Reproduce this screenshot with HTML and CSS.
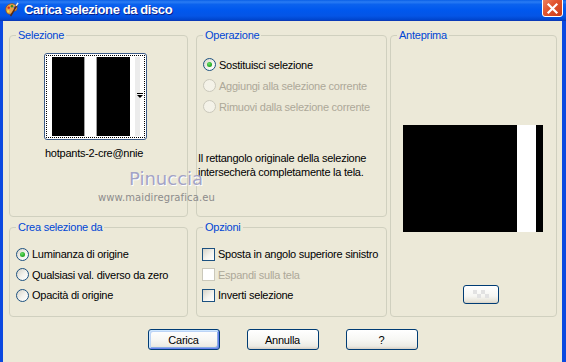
FILE: index.html
```html
<!DOCTYPE html>
<html lang="it">
<head>
<meta charset="utf-8">
<title>Carica selezione da disco</title>
<link rel="stylesheet" href="styles.css">
</head>
<body>
<div class="window">
  <header class="titlebar">
    <svg class="appicon" width="16" height="16" viewBox="0 0 16 16">
      <path d="M2 9 C1 4 6 1 10 2 C14 3 15 7 13 9 C12 10 10 9 9 11 C8 14 3 14 2 9 Z" fill="#e9a24a" stroke="#8a4a1a" stroke-width="0.8"/>
      <circle cx="5" cy="6" r="1.3" fill="#d62a1e"/>
      <circle cx="8.5" cy="4.5" r="1.3" fill="#2a8c2a"/>
      <circle cx="11.5" cy="6" r="1.2" fill="#2a4ad6"/>
      <circle cx="4.5" cy="10" r="1.2" fill="#f6e03a"/>
      <path d="M7 15 L14 3" stroke="#5a2a10" stroke-width="1.6"/>
      <path d="M13 4 L15 1" stroke="#f0f0f0" stroke-width="1.6"/>
    </svg>
    <span class="title">Carica selezione da disco</span>
    <div class="close">
      <svg width="13" height="13" viewBox="0 0 13 13"><path d="M2.5 2.5 L10.5 10.5 M10.5 2.5 L2.5 10.5" stroke="#fff" stroke-width="2.2" stroke-linecap="square"/></svg>
    </div>
  </header>

  <main class="body">
    <div class="groups">
      <fieldset class="grp sel">
        <legend>Selezione</legend>
        <div class="thumb">
          <div class="focus">
            <div class="img">
              <span class="st blk a"></span>
              <span class="st wht a"></span>
              <span class="st blk b"></span>
              <span class="st wht b"></span>
              <span class="st gry"></span>
            </div>
          </div>
          <span class="dd-arrow"></span>
        </div>
        <div class="fname">hotpants-2-cre@nnie</div>
      </fieldset>

      <fieldset class="grp op">
        <legend>Operazione</legend>
        <div class="opts">
          <div class="row"><span class="radio on"></span><span class="lbl">Sostituisci selezione</span></div>
          <div class="row dis"><span class="radio"></span><span class="lbl">Aggiungi alla selezione corrente</span></div>
          <div class="row dis"><span class="radio"></span><span class="lbl">Rimuovi dalla selezione corrente</span></div>
        </div>
        <p class="note">Il rettangolo originale della selezione intersecherà completamente la tela.</p>
      </fieldset>

      <fieldset class="grp prev">
        <legend>Anteprima</legend>
        <div class="preview">
          <span class="pv blk1"></span><span class="pv wht1"></span><span class="pv blk2"></span>
        </div>
        <div class="smallbtn">
          <svg width="16" height="10" viewBox="0 0 16 10">
            <rect x="0" y="0" width="4" height="4" fill="#e2e2e2"/><rect x="8" y="0" width="4" height="4" fill="#e2e2e2"/>
            <rect x="4" y="4" width="4" height="4" fill="#e2e2e2"/><rect x="12" y="4" width="4" height="4" fill="#e2e2e2"/>
          </svg>
        </div>
      </fieldset>

      <fieldset class="grp crea">
        <legend>Crea selezione da</legend>
        <div class="opts tight">
          <div class="row"><span class="radio on"></span><span class="lbl">Luminanza di origine</span></div>
          <div class="row"><span class="radio"></span><span class="lbl">Qualsiasi val. diverso da zero</span></div>
          <div class="row"><span class="radio"></span><span class="lbl">Opacità di origine</span></div>
        </div>
      </fieldset>

      <fieldset class="grp opz">
        <legend>Opzioni</legend>
        <div class="opts tight">
          <div class="row"><span class="check"></span><span class="lbl">Sposta in angolo superiore sinistro</span></div>
          <div class="row dis"><span class="check"></span><span class="lbl">Espandi sulla tela</span></div>
          <div class="row"><span class="check"></span><span class="lbl">Inverti selezione</span></div>
        </div>
      </fieldset>
    </div>

    <div class="buttons">
      <button class="btn default" type="button">Carica</button>
      <button class="btn" type="button">Annulla</button>
      <button class="btn" type="button">?</button>
    </div>
  </main>

  <div class="watermark">
    <span class="wm-name">Pinuccia</span>
    <span class="wm-url">www.maidiregrafica.eu</span>
  </div>
</div>
</body>
</html>
```

FILE: styles.css
```css
* { box-sizing: border-box; }

html, body {
  margin: 0;
  padding: 0;
  background: #ece9d8;
}

.window {
  position: relative;
  width: 566px;
  height: 362px;
  overflow: hidden;
  background: #ece9d8;
  font-family: "Liberation Sans", Arial, sans-serif;
  font-size: 11px;
  letter-spacing: -0.25px;
  color: #000;
}

/* ---------- title bar ---------- */
.titlebar {
  display: flex;
  align-items: center;
  height: 21px;
  padding: 0 0 2px 4px;
  background: linear-gradient(to bottom, #0a5fe6 0%, #2a7cf4 10%, #0b62ee 22%, #0058ee 50%, #0455e6 80%, #0044cc 100%);
  border-bottom: 1px solid #0a3ab8;
  overflow: hidden;
}

.appicon {
  flex: none;
  width: 15px;
  height: 15px;
}

.title {
  margin-left: 5px;
  color: #fff;
  font-family: "Liberation Sans", Arial, sans-serif;
  font-weight: bold;
  font-size: 13px;
  letter-spacing: -0.4px;
  text-shadow: 1px 1px 0 #0a1e8a;
}

.close {
  flex: none;
  align-self: flex-start;
  margin: -4px 3px 0 auto;
  width: 21px;
  height: 21px;
  border: 1px solid #fff;
  border-radius: 3px;
  background: linear-gradient(135deg, #f08a6a 0%, #e2552f 45%, #c83a17 100%);
  display: flex;
  align-items: center;
  justify-content: center;
  padding-top: 3px;
}

/* ---------- body ---------- */
.body {
  height: 341px;
  padding: 8px 0 0 6px;
  border-left: 3px solid #0b48e0;
  border-right: 4px solid #0b48e0;
}

.groups {
  display: grid;
  grid-template-columns: 187px 194px 167px;
  grid-template-rows: 188px 96px;
  row-gap: 4px;
}

.grp {
  margin: 0;
  padding: 0;
  min-width: 0;
  border: 1px solid #d0d0bf;
  border-radius: 4px;
}

.grp legend {
  margin-left: 6px;
  padding: 0 2px;
  line-height: 13px;
  color: #0046d5;
}

.sel { grid-column: 1; grid-row: 1; margin-right: 8px; }
.op { grid-column: 2; grid-row: 1; margin-right: 3px; }
.prev { grid-column: 3; grid-row: 1 / span 2; }
.crea { grid-column: 1; grid-row: 2; margin-right: 8px; }
.opz { grid-column: 2; grid-row: 2; margin-right: 3px; }

/* ---------- selection thumbnail ---------- */
.thumb {
  position: relative;
  width: 103px;
  height: 87px;
  margin: 11px 0 0 34px;
  padding: 1px;
  border: 1px solid #3c5a86;
  border-radius: 3px;
  background: #fff;
}

.focus {
  height: 100%;
  border: 1px dotted #000;
  padding: 1px 0 1px 5px;
}

.img {
  display: flex;
  height: 100%;
}

.st { display: block; height: 100%; flex: none; }
.st.blk.a { width: 32px; background: #000; }
.st.wht.a { width: 13px; background: #fff; border-left: 1px solid #a0a0a0; border-right: 1px solid #a0a0a0; }
.st.blk.b { width: 33px; background: #000; }
.st.wht.b { width: 5px; background: #fff; }
.st.gry { width: 5px; background: #ececec; }

.dd-arrow {
  position: absolute;
  left: 92px;
  top: 41px;
  width: 0;
  height: 0;
  border-left: 3px solid transparent;
  border-right: 3px solid transparent;
  border-top: 3px solid #000;
}
.dd-arrow::before {
  content: "";
  position: absolute;
  left: -3px;
  top: -5px;
  width: 6px;
  height: 1px;
  background: #000;
}

.fname {
  margin: 7px 0 0 35px;
  line-height: 13px;
}

/* ---------- options ---------- */
.opts {
  display: flex;
  flex-direction: column;
  padding: 12px 0 0 6px;
}

.opts .row {
  display: flex;
  align-items: center;
  height: 21px;
  gap: 3px;
}

.opts.tight {
  padding-top: 10px;
}
.opts.tight .row {
  height: 20.5px;
}

.opz .opts { padding-left: 5px; }

.row.dis .lbl { color: #aca899; }

.radio {
  position: relative;
  flex: none;
  width: 13px;
  height: 13px;
  border-radius: 50%;
  border: 1px solid #1c5180;
  background: linear-gradient(135deg, #d6d3c8 0%, #f4f3ee 55%, #ffffff 100%);
}
.radio.on::after {
  content: "";
  position: absolute;
  left: 3px;
  top: 3px;
  width: 5px;
  height: 5px;
  border-radius: 50%;
  background: radial-gradient(circle at 40% 35%, #6ee06e 0%, #2fb52f 50%, #1a8a1a 100%);
}
.row.dis .radio {
  border-color: #cac8bb;
  background: #f4f2e8;
}

.check {
  flex: none;
  width: 13px;
  height: 13px;
  border: 1px solid #1c5180;
  background: linear-gradient(135deg, #d6d3c8 0%, #f4f3ee 55%, #ffffff 100%);
}
.row.dis .check {
  border-color: #cac8bb;
  background: #fff;
}

.note {
  margin: 34px 0 0 1px;
  line-height: 14px;
}

/* ---------- preview ---------- */
.preview {
  display: flex;
  width: 140px;
  height: 107px;
  margin: 83px 0 0 12px;
}
.pv { display: block; height: 100%; }
.pv.blk1 { width: 114px; background: #000; }
.pv.wht1 { width: 19px; background: #fff; }
.pv.blk2 { width: 7px; background: #000; }

.smallbtn {
  display: flex;
  align-items: center;
  justify-content: center;
  width: 36px;
  height: 19px;
  margin: 53px 0 0 72px;
  border: 1px solid #003c74;
  border-radius: 3px;
  background: linear-gradient(to bottom, #ffffff 0%, #f6f6f2 60%, #e6e3d8 90%, #d6d0c5 100%);
}

/* ---------- buttons ---------- */
.buttons {
  display: flex;
  justify-content: center;
  gap: 27px;
  margin-top: 12px;
  padding-right: 6px;
}

.btn {
  width: 72px;
  height: 21px;
  padding: 0;
  border: 1px solid #003c74;
  border-radius: 3px;
  background: linear-gradient(to bottom, #ffffff 0%, #f7f7f4 50%, #ecebe4 85%, #d6d0c5 100%);
  font-family: "Liberation Sans", Arial, sans-serif;
  font-size: 11px;
  letter-spacing: -0.25px;
  color: #000;
}

.btn.default {
  box-shadow: inset 1px 1px 0 #cee7ff, inset -1px -1px 0 #6982ee, inset 2px 2px 0 #bcd4f6, inset -2px -2px 0 #89ade4;
}

/* ---------- watermark ---------- */
.watermark {
  position: absolute;
  left: 98px;
  top: 169px;
  display: flex;
  flex-direction: column;
  align-items: flex-start;
  pointer-events: none;
}

.wm-name {
  margin-left: 31px;
  font-family: "DejaVu Sans", sans-serif;
  font-size: 18px;
  line-height: 20px;
  letter-spacing: 0;
  color: #a3a3c6;
  text-shadow: 1px 1px 0 #ffffff;
}

.wm-url {
  margin-top: 3px;
  font-family: "DejaVu Sans", sans-serif;
  font-size: 10px;
  line-height: 12px;
  letter-spacing: 0.1px;
  color: #8c8c8c;
}
```
